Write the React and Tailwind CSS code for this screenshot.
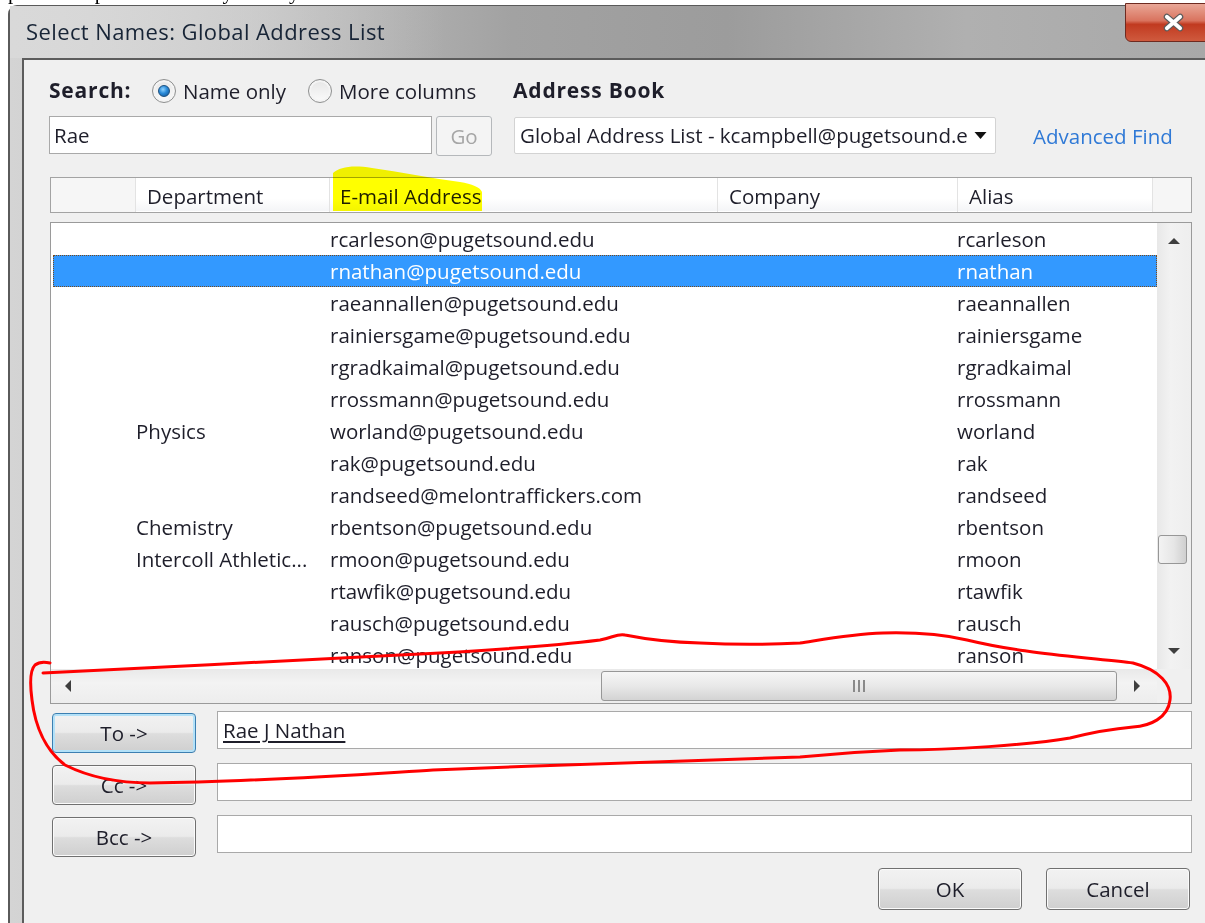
import React from 'react'

const rows = [
  { dept: '', email: 'rcarleson@pugetsound.edu', alias: 'rcarleson' },
  { dept: '', email: 'rnathan@pugetsound.edu', alias: 'rnathan', selected: true },
  { dept: '', email: 'raeannallen@pugetsound.edu', alias: 'raeannallen' },
  { dept: '', email: 'rainiersgame@pugetsound.edu', alias: 'rainiersgame' },
  { dept: '', email: 'rgradkaimal@pugetsound.edu', alias: 'rgradkaimal' },
  { dept: '', email: 'rrossmann@pugetsound.edu', alias: 'rrossmann' },
  { dept: 'Physics', email: 'worland@pugetsound.edu', alias: 'worland' },
  { dept: '', email: 'rak@pugetsound.edu', alias: 'rak' },
  { dept: '', email: 'randseed@melontraffickers.com', alias: 'randseed' },
  { dept: 'Chemistry', email: 'rbentson@pugetsound.edu', alias: 'rbentson' },
  { dept: 'Intercoll Athletic...', email: 'rmoon@pugetsound.edu', alias: 'rmoon' },
  { dept: '', email: 'rtawfik@pugetsound.edu', alias: 'rtawfik' },
  { dept: '', email: 'rausch@pugetsound.edu', alias: 'rausch' },
  { dept: '', email: 'ranson@pugetsound.edu', alias: 'ranson' },
]

function Radio({ checked }) {
  return (
    <span className="shrink-0 w-[24px] h-[24px] rounded-full border border-[#8e8f8f] bg-gradient-to-b from-[#e6e6e6] to-[#fbfbfb] flex items-center justify-center shadow-[inset_0_0_0_2px_#f4f4f4]">
      {checked && (
        <span className="w-[12px] h-[12px] rounded-full bg-[radial-gradient(circle_at_40%_35%,#8fd3ff_0%,#2a8ad8_45%,#10508f_100%)] border border-[#1b4f7e]" />
      )}
    </span>
  )
}

function Triangle({ dir }) {
  const pts = {
    up: '1,8 7,2 13,8',
    down: '1,2 7,8 13,2',
    left: '8,1 2,7 8,13',
    right: '2,1 8,7 2,13',
  }[dir]
  const box = dir === 'up' || dir === 'down' ? '0 0 14 10' : '0 0 10 14'
  const size = dir === 'up' || dir === 'down' ? 'w-[14px] h-[10px]' : 'w-[10px] h-[14px]'
  return (
    <svg viewBox={box} className={size}>
      <polygon points={pts} fill="#3f3f3f" />
    </svg>
  )
}

function WinButton({ label, focused, className = '' }) {
  return (
    <button
      className={
        'w-[144px] rounded-[4px] border text-[20.5px] text-[#1e1e2a] bg-[linear-gradient(#f2f2f2_0%,#ebebeb_48%,#dddddd_52%,#cfcfcf_100%)] ' +
        (focused
          ? 'border-[#3c7fb1] shadow-[inset_0_0_0_2px_#b3e1f8]'
          : 'border-[#707070] shadow-[inset_0_0_0_1px_#fbfbfb]') +
        ' ' +
        className
      }
    >
      {label}
    </button>
  )
}

export default function App() {
  return (
    <div className="w-[1205px] h-[923px] bg-white relative overflow-hidden font-['Open_Sans',sans-serif] text-[#1e1e2a]">
      {/* bit of the page text above the dialog */}
      <div className="h-[5px] overflow-hidden font-['Liberation_Serif',serif] text-[21px] leading-none text-black">
        <p className="-mt-[18px] pl-[8px] whitespace-nowrap">please keep the screen tidy when you are done and close the window afterwards</p>
      </div>

      <div className="ml-[8px] h-[918px] rounded-tl-[9px] border-l-2 border-t border-[#5a5a5a] bg-[linear-gradient(90deg,#d4d4d4_0%,#c2c2c2_20%,#a2a2a2_42%,#9c9c9c_60%,#b0b0b0_80%,#a8a8a8_100%)] flex flex-col">
        {/* title bar */}
        <div className="h-[52px] flex justify-between">
          <div className="pl-[16px] pt-[9px] text-[22px] tracking-[0.4px] text-[#172436] bg-[linear-gradient(90deg,#d9d9d9,rgba(217,217,217,0))] pr-[60px]">
            Select Names: Global Address List
          </div>
          <div className="-mt-[3px] -mr-[16px] w-[96px] h-[39px] rounded-bl-[6px] border border-[#6e2a20] bg-[linear-gradient(#e9a797_0%,#d9735e_45%,#c13a20_55%,#cf5a3e_100%)] flex items-center justify-center">
            <svg viewBox="0 0 24 20" className="w-[23px] h-[19px]">
              <path d="M5 4 L19 16 M19 4 L5 16" stroke="#5b5b5b" strokeWidth="6.5" strokeLinecap="round" />
              <path d="M5 4 L19 16 M19 4 L5 16" stroke="#ffffff" strokeWidth="4" strokeLinecap="round" />
            </svg>
          </div>
        </div>

        {/* client area */}
        <div className="flex-1 ml-[12px] border-l-2 border-t-2 border-[#5c5c5c] bg-[#f0f0f0] pl-[25px] text-[20.5px]">
          {/* search row */}
          <div className="mt-[16px] h-[30px] flex items-center">
            <span className="w-[103px] font-bold text-[21px] tracking-[0.8px]">Search:</span>
            <span className="w-[156px] flex items-center gap-[7px]">
              <Radio checked />
              <span>Name only</span>
            </span>
            <span className="w-[205px] flex items-center gap-[7px]">
              <Radio />
              <span>More columns</span>
            </span>
            <span className="font-bold text-[21px] tracking-[0.8px]">Address Book</span>
          </div>

          <div className="mt-[10px] h-[40px] flex items-start">
            <div className="w-[383px] h-[38px] bg-white border border-[#a9a9a9] flex items-center pl-[4px]">Rae</div>
            <button className="ml-[4px] w-[56px] h-[40px] rounded-[3px] border border-[#b5b8bb] bg-[#f4f4f4] text-[#a6a6a6]">Go</button>
            <div className="ml-[22px] mt-[1px] w-[482px] h-[37px] bg-white border border-[#d3d3d3] rounded-[2px] flex items-center pl-[5px] pr-[8px]">
              <span className="flex-1 overflow-hidden whitespace-nowrap">Global Address List - kcampbell@pugetsound.edu</span>
              <svg viewBox="0 0 12 7" className="ml-[6px] w-[13px] h-[7px]">
                <polygon points="0,0 12,0 6,7" fill="#111" />
              </svg>
            </div>
            <span className="ml-[37px] mt-[5px] text-[#2f79d6]">Advanced Find</span>
          </div>

          {/* column header */}
          <div className="mt-[21px] ml-[1px] w-[1142px] h-[36px] border border-[#a3a3a3] bg-[linear-gradient(#ffffff_0%,#ffffff_60%,#f3f4f6_100%)] flex shadow-[inset_0_0_0_1px_#ffffff]">
            <div className="w-[85px] bg-[#f6f6f6] border-r border-[#e3e3e3]" />
            <div className="w-[194px] border-r border-[#e3e3e3] pl-[11px] pt-[3px] flex items-center">Department</div>
            <div className="w-[388px] border-r border-[#e3e3e3] pl-[10px] pt-[3px] flex items-center">E-mail Address</div>
            <div className="w-[240px] border-r border-[#e3e3e3] pl-[11px] pt-[3px] flex items-center">Company</div>
            <div className="w-[195px] border-r border-[#e3e3e3] pl-[11px] pt-[3px] flex items-center">Alias</div>
            <div className="flex-1 bg-[#f6f6f6]" />
          </div>

          {/* result list */}
          <div className="mt-[9px] ml-[1px] w-[1142px] h-[482px] border border-[#9a9a9a] bg-white flex flex-col">
            <div className="h-[446px] flex">
              <div className="flex-1 overflow-hidden">
                {rows.map((r) => (
                  <div
                    key={r.email}
                    className={
                      'ml-[2px] h-[32px] grid grid-cols-[83px_194px_388px_240px_1fr] items-center ' +
                      (r.selected ? 'bg-[#3399ff] text-white border border-dotted border-[#7a4a1a]' : '')
                    }
                  >
                    <span />
                    <span className={'whitespace-nowrap ' + (r.selected ? '-ml-px' : '')}>{r.dept}</span>
                    <span className={r.selected ? '-ml-px' : ''}>{r.email}</span>
                    <span />
                    <span className={r.selected ? '-ml-[2px]' : '-ml-px'}>{r.alias}</span>
                  </div>
                ))}
              </div>
              {/* vertical scrollbar */}
              <div className="w-[34px] bg-[linear-gradient(90deg,#e8e8e8,#f2f2f2_40%,#eeeeee)] flex flex-col items-center">
                <div className="h-[36px] flex items-center justify-center">
                  <Triangle dir="up" />
                </div>
                <div className="flex-1 flex flex-col">
                  <div className="h-[276px]" />
                  <div className="-ml-[3px] w-[29px] h-[29px] rounded-[3px] border border-[#979797] bg-[linear-gradient(90deg,#f3f3f3,#e6e6e6_55%,#cfcfcf)]" />
                </div>
                <div className="h-[36px] flex items-center justify-center">
                  <Triangle dir="down" />
                </div>
              </div>
            </div>
            {/* horizontal scrollbar */}
            <div className="flex-1 flex">
              <div className="flex-1 bg-[linear-gradient(#e9e9e9,#f3f3f3_40%,#ededed)] flex items-center">
                <div className="w-[34px] flex justify-center">
                  <Triangle dir="left" />
                </div>
                <div className="w-[516px]" />
                <div className="w-[516px] h-[30px] rounded-[3px] border border-[#979797] bg-[linear-gradient(#f6f6f6,#e8e8e8_50%,#d3d3d3)] flex items-center justify-center gap-[3px]">
                  <span className="w-[2px] h-[12px] bg-[#8a8a8a]" />
                  <span className="w-[2px] h-[12px] bg-[#8a8a8a]" />
                  <span className="w-[2px] h-[12px] bg-[#8a8a8a]" />
                </div>
                <div className="flex-1 flex justify-center">
                  <Triangle dir="right" />
                </div>
              </div>
              <div className="w-[34px] bg-[#f0f0f0]" />
            </div>
          </div>

          {/* recipient lines */}
          <div className="mt-[9px] flex flex-col gap-[12px]">
            {[
              { label: 'To ->', focused: true, value: 'Rae J Nathan' },
              { label: 'Cc ->' },
              { label: 'Bcc ->' },
            ].map((b) => (
              <div key={b.label} className="flex items-start">
                <WinButton label={b.label} focused={b.focused} className="ml-[3px] h-[40px]" />
                <div className="ml-[21px] -mt-[2px] w-[975px] h-[38px] bg-white border border-[#a9a9a9] flex items-center pl-[5px]">
                  {b.value && <span className="underline underline-offset-[3px]">{b.value}</span>}
                </div>
              </div>
            ))}
          </div>

          <div className="mt-[11px] flex justify-end pr-[15px] gap-[24px]">
            <WinButton label="OK" className="h-[42px]" />
            <WinButton label="Cancel" className="h-[42px]" />
          </div>
        </div>
      </div>

      {/* highlighter and pen marks drawn over the dialog */}
      <svg className="absolute left-0 top-0 w-[1205px] h-[923px] pointer-events-none mix-blend-multiply" viewBox="0 0 1205 923">
        <path d="M333 173 C340 167 352 165 372 168 C400 172 430 178 460 182 C472 184 480 187 482 192 L482 211 L333 211 Z" fill="#ffff00" />
      </svg>
      <svg className="absolute left-0 top-0 w-[1205px] h-[923px] pointer-events-none" viewBox="0 0 1205 923">
        <path
          d="M43 673 C150 668 300 660 400 655 C480 651 560 645 600 640 C612 638 618 633 625 635 C635 637 660 642 700 643 C740 645 780 644 800 643 C820 640 850 634 883 633 C920 632 950 636 967 640 C1000 648 1020 650 1033 652 C1070 657 1110 660 1133 663 C1160 670 1172 685 1170 700 C1168 718 1150 726 1133 727 C1110 729 1090 733 1070 738 C1030 745 950 750 900 750 C850 752 820 755 800 757 C700 760 560 765 433 770 C350 775 250 782 150 783 C110 783 85 775 65 765 C45 750 35 725 32 700 C30 685 30 670 35 665 C40 661 46 662 50 663"
          fill="none"
          stroke="#ff0000"
          strokeWidth="3"
          strokeLinecap="round"
          strokeLinejoin="round"
        />
      </svg>
    </div>
  )
}
